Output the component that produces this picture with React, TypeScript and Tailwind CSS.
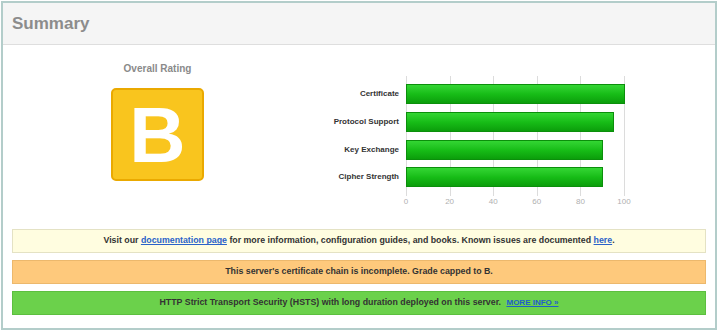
const bars = [
    { label: 'Certificate', value: 100 },
    { label: 'Protocol Support', value: 95 },
    { label: 'Key Exchange', value: 90 },
    { label: 'Cipher Strength', value: 90 },
];

const ticks = [0, 20, 40, 60, 80, 100];

export default function App() {
    return (
        <div className="h-[335px] w-[720px] bg-white p-px font-['Liberation_Sans',Arial,sans-serif]">
            <div className="flex h-[329px] w-[716px] flex-col border-2 border-[#b3cdca] bg-white">
                {/* Header */}
                <div className="flex h-[42px] items-center border-b border-[#dedede] bg-[#f5f5f5] px-[9px]">
                    <h2 className="text-[17px] font-bold text-[#8c8c8c]">Summary</h2>
                </div>

                {/* Rating + chart */}
                <div className="flex h-[181px]">
                    <div className="flex w-[309px] flex-col items-center pt-[19px]">
                        <p className="text-[10px] leading-none font-bold text-[#8a8a8a]">Overall Rating</p>
                        <div className="mt-[14px] flex size-[93px] items-center justify-center rounded-[5px] border-2 border-[#eaa900] bg-[#f9c51e]">
                            <span className="text-[78px] leading-none font-bold text-white">B</span>
                        </div>
                    </div>

                    <div className="flex pt-[31px]">
                        <div className="flex w-[87px] flex-col gap-[7.8px] pt-[8px]">
                            {bars.map((bar) => (
                                <div key={bar.label} className="flex h-5 items-center justify-end text-[8px] font-bold text-[#333]">
                                    {bar.label}
                                </div>
                            ))}
                        </div>
                        <div className="ml-[7px] flex flex-col">
                            <div className="relative h-[120px] w-[219px]">
                                {ticks.map((t) => (
                                    <div
                                        key={t}
                                        className="absolute top-0 bottom-0 w-px bg-[#dcdcdc]"
                                        style={{ left: `${(t / 100) * 218}px` }}
                                    />
                                ))}
                                <div className="relative flex flex-col gap-[7.8px] pt-[8px]">
                                    {bars.map((bar) => (
                                        <div
                                            key={bar.label}
                                            className="h-5 border border-[#0b8f0b] bg-gradient-to-b from-[#33d633] via-[#17bd17] to-[#0b9e0b]"
                                            style={{ width: `${(bar.value / 100) * 219}px` }}
                                        />
                                    ))}
                                </div>
                            </div>
                            <div className="relative h-[12px] w-[219px] text-[8px] text-[#b0b0b0]">
                                {ticks.map((t) => (
                                    <span
                                        key={t}
                                        className="absolute top-0 -translate-x-1/2"
                                        style={{ left: `${(t / 100) * 218}px` }}
                                    >
                                        {t}
                                    </span>
                                ))}
                            </div>
                        </div>
                    </div>
                </div>

                {/* Notices */}
                <div className="flex flex-col gap-[7px] px-[9px] pt-[3px] text-[8.8px] font-bold text-[#333]">
                    <div className="flex h-[24px] items-center justify-center border border-[#e4e2c4] bg-[#fffde0]">
                        <p>
                            Visit our <a className="text-[#2a62c9] underline">documentation page</a> for more information, configuration guides, and books. Known issues are documented{' '}
                            <a className="text-[#2a62c9] underline">here</a>.
                        </p>
                    </div>
                    <div className="flex h-[24px] items-center justify-center border border-[#ecb86c] bg-[#fec97c]">
                        <p>This server's certificate chain is incomplete. Grade capped to B.</p>
                    </div>
                    <div className="flex h-[24px] items-center justify-center border border-[#5cbf3f] bg-[#6bd14b]">
                        <p>
                            HTTP Strict Transport Security (HSTS) with long duration deployed on this server.{' '}
                            <a className="ml-[3px] text-[8px] text-[#1f5fc9] underline">MORE INFO »</a>
                        </p>
                    </div>
                </div>
            </div>
        </div>
    );
}
